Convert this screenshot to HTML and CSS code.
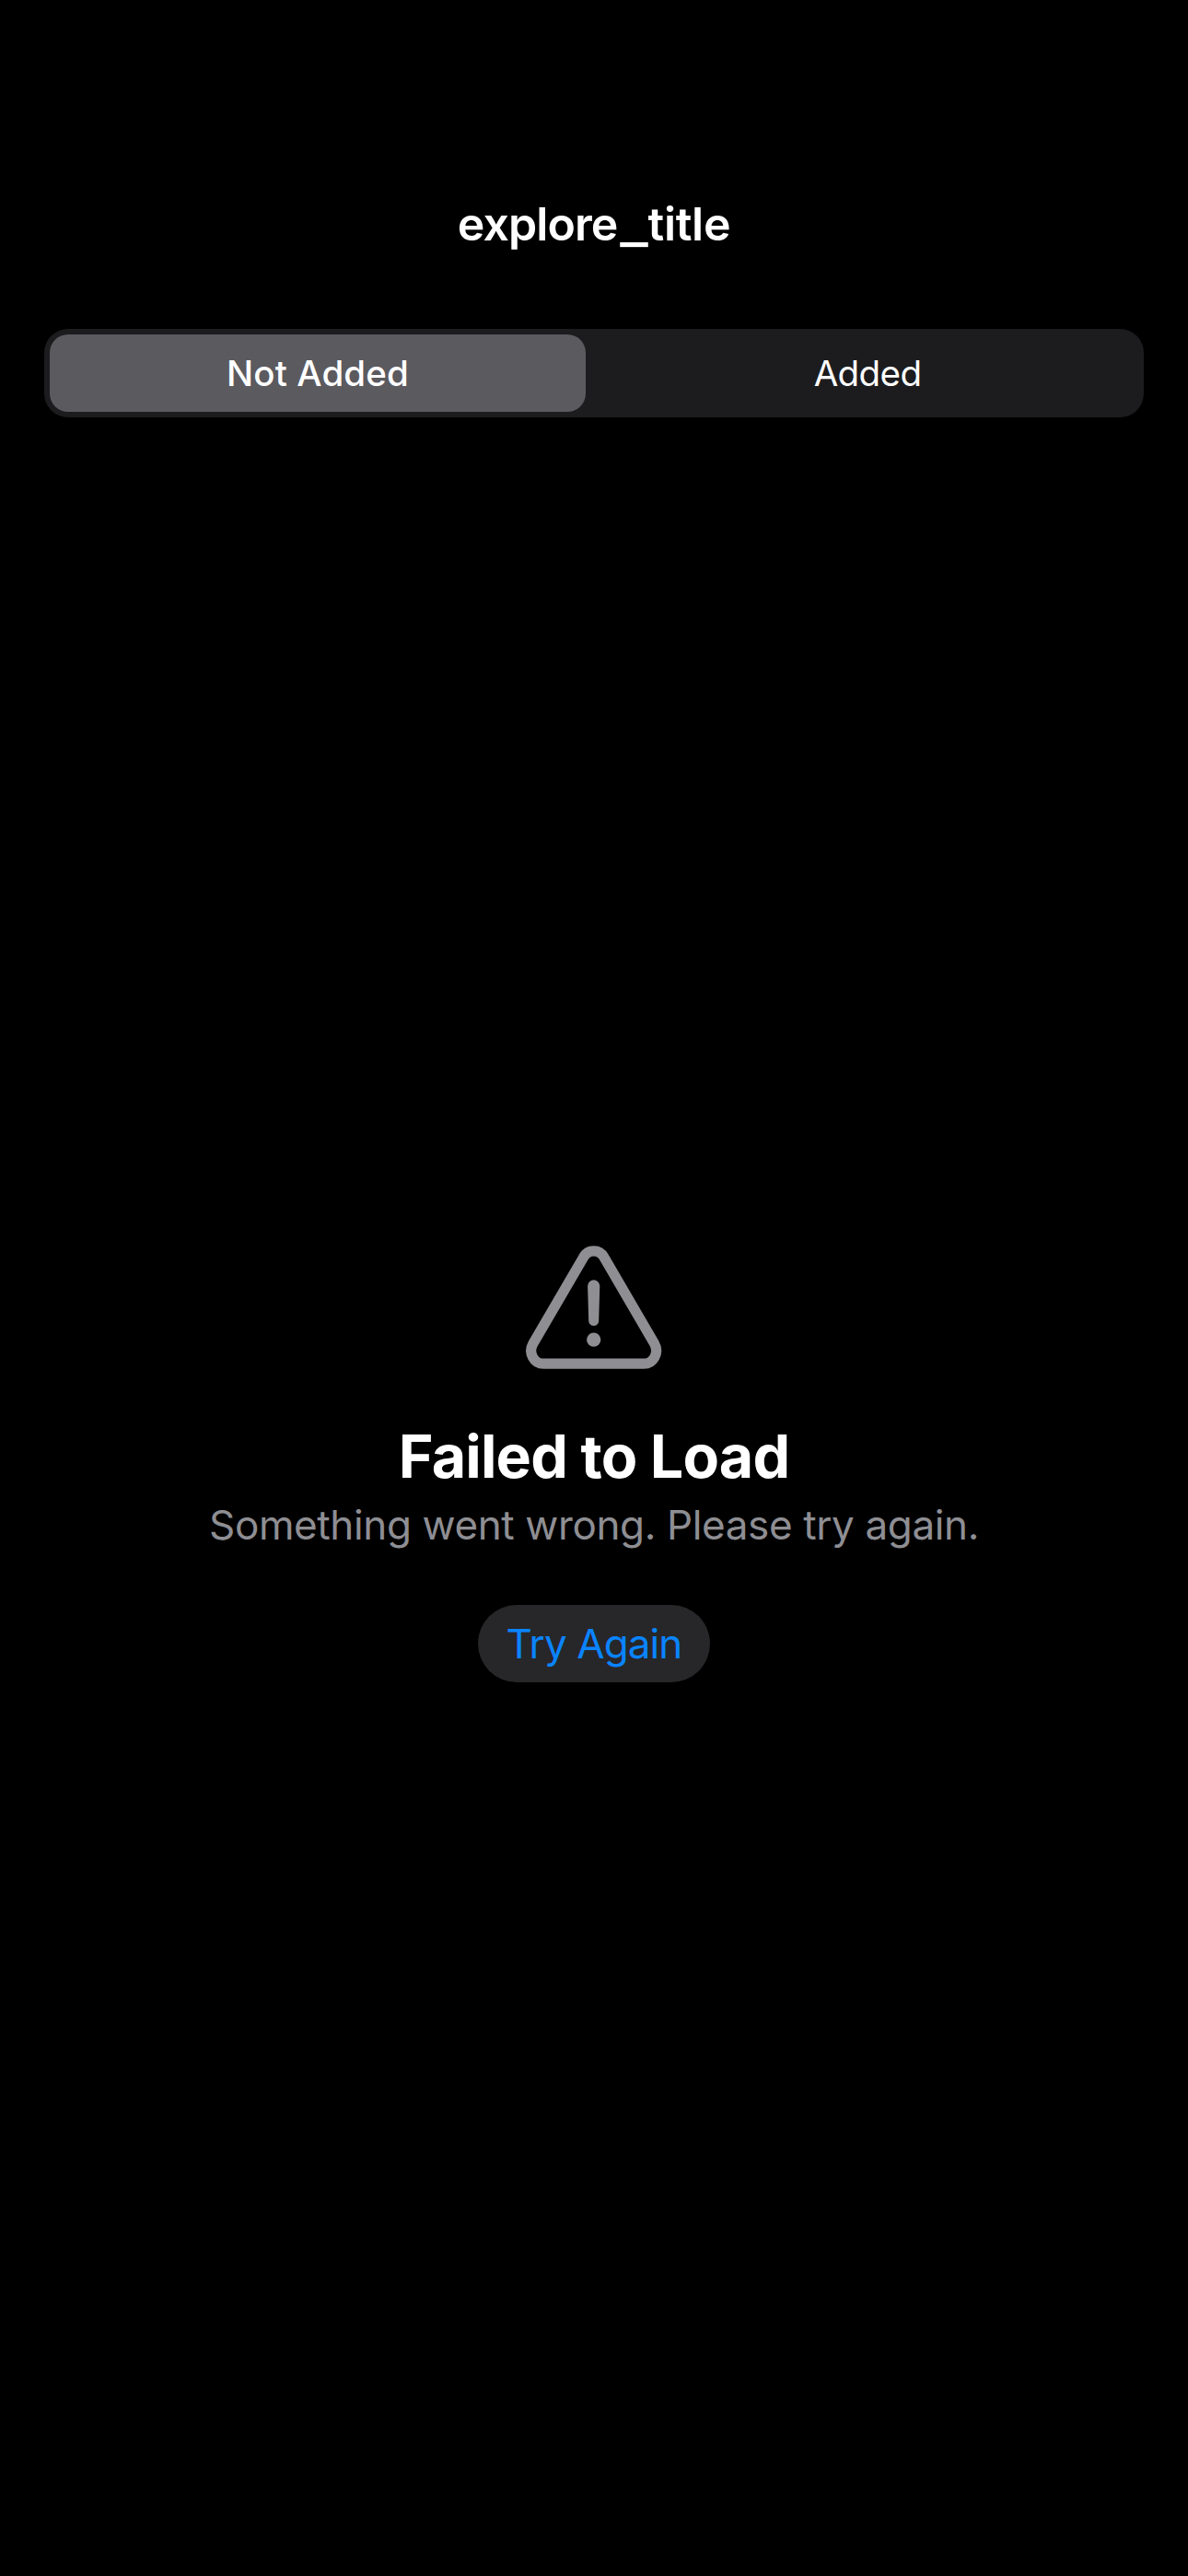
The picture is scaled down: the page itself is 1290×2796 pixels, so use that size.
FILE: index.html
```html
<!DOCTYPE html>
<html lang="en">
<head>
  <meta charset="utf-8">
  <title>explore_title</title>
  <link rel="stylesheet" href="styles.css">
</head>
<body>
  <div class="screen">
    <header class="header">
      <h1 class="title"><span class="title-lead">explore</span><span class="underscore">_</span>title</h1>
      <div class="segmented" role="tablist">
        <button class="segment segment-selected" role="tab" aria-selected="true">Not Added</button>
        <button class="segment" role="tab" aria-selected="false">Added</button>
      </div>
    </header>
    <main class="empty-state">
      <svg class="warning-icon" viewBox="0 0 150 136" aria-hidden="true">
        <path d="M63.5 13.7C68.3 4.5 81 4.5 86 13.7L140.5 107.3C146.2 117.5 139.5 129.2 129 129.2H20.3C9.8 129.2 3.1 117.5 8.9 107.3Z" fill="none" stroke="currentColor" stroke-width="11.2"/>
        <path d="M68.1 44.8a6.6 6.6 0 0 1 13.2 0L80.2 82.5a5.5 5.5 0 0 1-11 0Z" fill="currentColor"/>
        <circle cx="74.7" cy="103.2" r="7.6" fill="currentColor"/>
      </svg>
      <h2 class="heading">Failed to Load</h2>
      <p class="message">Something went wrong. Please try again.</p>
      <button class="retry">Try Again</button>
    </main>
  </div>
</body>
</html>
```
FILE: styles.css
```css
* {
  box-sizing: border-box;
}

body {
  margin: 0;
  background: #000;
  color: #fff;
  font-family: Inter, "Liberation Sans", sans-serif;
}

button {
  border: 0;
  margin: 0;
  padding: 0;
  background: none;
  color: inherit;
  font: inherit;
}

.screen {
  display: flex;
  flex-direction: column;
  width: 1290px;
  height: 2796px;
}

.header {
  display: flex;
  flex-direction: column;
  gap: 84px;
  padding: 213px 48px 0;
}

.title {
  margin: 0;
  font-size: 50px;
  font-weight: 600;
  line-height: 60px;
  letter-spacing: -0.3px;
  text-align: center;
}

.title-lead {
  letter-spacing: -0.9px;
}

.underscore {
  display: inline-block;
  width: 33px;
  letter-spacing: 0;
  transform: translate(1px, 1.5px) scaleX(1.3);
}

.segmented {
  display: grid;
  grid-template-columns: 582px 1fr;
  gap: 9px;
  height: 96px;
  padding: 6px 3px 6px 6px;
  border-radius: 26px;
  background: #1c1c1e;
}

.segment {
  border-radius: 20px;
  font-size: 38.5px;
  line-height: 46px;
  letter-spacing: -0.6px;
}

.segment-selected {
  background: #5b5a5f;
  font-weight: 550;
  letter-spacing: 0.12px;
}

.empty-state {
  display: flex;
  flex-direction: column;
  align-items: center;
  padding-top: 898px;
}

.warning-icon {
  width: 150px;
  height: 136px;
  color: #8e8e93;
}

.heading {
  margin: 55px 0 0;
  font-size: 64.5px;
  font-weight: 700;
  line-height: 78px;
  letter-spacing: -0.82px;
}

.message {
  margin: 8px 0 0;
  color: #8e8e93;
  font-size: 44px;
  line-height: 54px;
  letter-spacing: -0.37px;
}

.retry {
  width: 252px;
  height: 84px;
  margin-top: 60px;
  border-radius: 42px;
  background: #272729;
  color: #0a84ff;
  font-size: 44px;
  line-height: 54px;
  letter-spacing: -0.9px;
}
```
